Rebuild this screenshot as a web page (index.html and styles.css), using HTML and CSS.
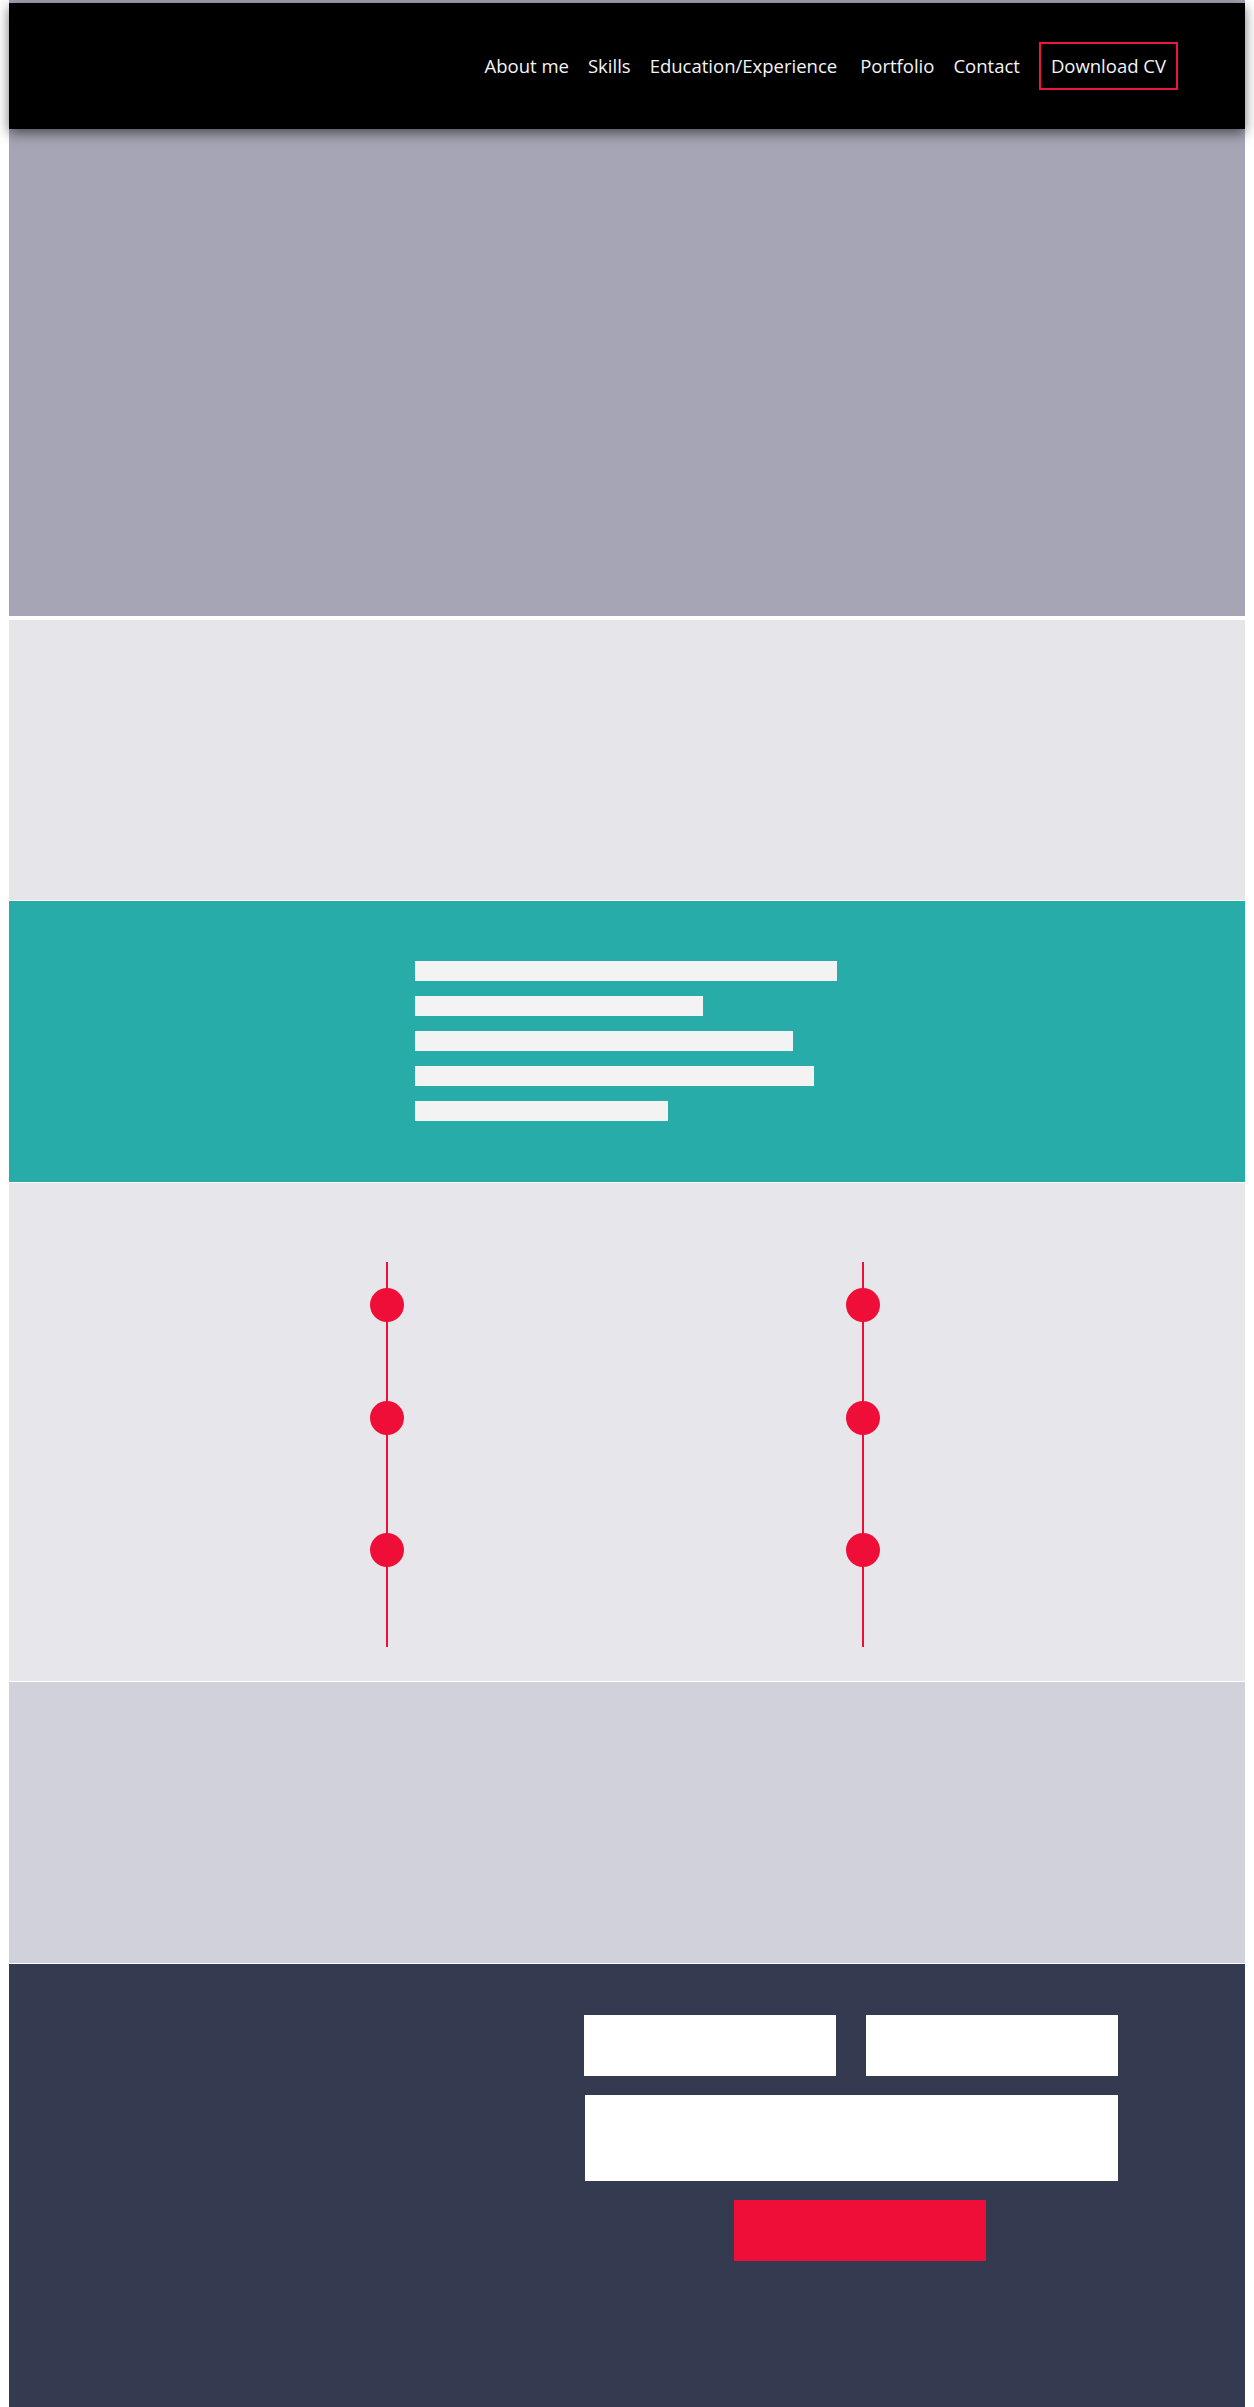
FILE: index.html
```html
<!DOCTYPE html>
<html lang="en">
<head>
    <meta charset="UTF-8">
    <meta name="viewport" content="width=device-width, initial-scale=1.0">
    <title>Portfolio</title>
    <link rel="stylesheet" href="styles.css">
</head>
<body>
    <div class="page">
        <header class="header">
            <nav class="nav">
                <a href="#about">About me</a>
                <a href="#skills">Skills</a>
                <a href="#education" class="wide">Education/Experience</a>
                <a href="#portfolio">Portfolio</a>
                <a href="#contact">Contact</a>
                <a href="#" class="cv-button">Download CV</a>
            </nav>
        </header>

        <section class="hero" id="home"></section>

        <section class="about" id="about"></section>

        <!-- skills placeholder lines -->
        <section class="skills" id="skills">
            <div class="bar-list">
                <div class="bar bar-1"></div>
                <div class="bar bar-2"></div>
                <div class="bar bar-3"></div>
                <div class="bar bar-4"></div>
                <div class="bar bar-5"></div>
            </div>
        </section>

        <section class="education" id="education">
            <div class="timeline">
                <span class="dot"></span>
                <span class="dot"></span>
                <span class="dot"></span>
            </div>
            <div class="timeline">
                <span class="dot"></span>
                <span class="dot"></span>
                <span class="dot"></span>
            </div>
        </section>

        <section class="portfolio" id="portfolio"></section>

        <section class="contact" id="contact">
            <div class="contact-info"></div>
            <form class="contact-form" onsubmit="return false;">
                <div class="form-row">
                    <input type="text" class="field" aria-label="Name">
                    <input type="email" class="field" aria-label="Email">
                </div>
                <textarea class="field message" aria-label="Message"></textarea>
                <button type="submit" class="send-button" aria-label="Send"></button>
            </form>
        </section>
    </div>
</body>
</html>
```

FILE: styles.css
```css
* {
    margin: 0;
    padding: 0;
    box-sizing: border-box;
}

body {
    background: #fff;
    padding: 0 9px;
    font-family: 'Open Sans', 'Liberation Sans', sans-serif;
}

.page {
    position: relative;
    display: flex;
    flex-direction: column;
    gap: 1px;
}

/* Navigation bar over the hero */
.header {
    position: absolute;
    top: 3px;
    left: 0;
    right: 0;
    height: 126px;
    background: #000;
    box-shadow: 0 4px 12px rgba(0, 0, 0, 0.55);
    display: flex;
    align-items: center;
    justify-content: flex-end;
    padding-right: 67px;
    z-index: 10;
}

.nav {
    display: flex;
    align-items: center;
    gap: 19px;
}

.nav a {
    color: #f4f4f4;
    text-decoration: none;
    font-size: 18.5px;
    line-height: 24px;
}

.nav a.wide {
    margin-right: 4px;
}

.nav .cv-button {
    height: 48px;
    padding: 0 10px;
    border: 2px solid #ea1640;
    display: flex;
    align-items: center;
}

.hero {
    height: 616px;
    background: #a5a5b5;
    margin-bottom: 3px;
}

.about {
    height: 280px;
    background: #e6e5ea;
}

.skills {
    height: 281px;
    background: #27aca9;
    padding: 60px 0 0 406px;
}

.bar-list {
    display: flex;
    flex-direction: column;
    gap: 15px;
}

.bar {
    height: 20px;
    background: #f3f3f3;
}

.bar-1 { width: 422px; }
.bar-2 { width: 288px; }
.bar-3 { width: 378px; }
.bar-4 { width: 399px; }
.bar-5 { width: 253px; }

.education {
    height: 498px;
    background: #e7e6eb;
    padding: 79px 0 34px 361px;
    display: flex;
    gap: 442px;
}

.timeline {
    width: 34px;
    height: 385px;
    background: linear-gradient(#ef0e37, #ef0e37) center / 2px 100% no-repeat;
    display: flex;
    flex-direction: column;
    padding-top: 26px;
}

.dot {
    width: 34px;
    height: 34px;
    border-radius: 50%;
    background: #ef0e37;
}

.dot + .dot {
    margin-top: 79px;
}

.dot:last-child {
    margin-top: 98px;
}

.portfolio {
    height: 281px;
    background: #d1d1db;
}

.contact {
    height: 443px;
    background: #343b50;
    padding-top: 51px;
    display: grid;
    grid-template-columns: 575px 534px;
    align-items: start;
}

.contact-form {
    display: flex;
    flex-direction: column;
    gap: 19px;
}

.form-row {
    display: flex;
    gap: 30px;
}

.field {
    display: block;
    border: none;
    background: #fff;
    width: 252px;
    height: 61px;
    outline: none;
    font-family: inherit;
}

.field.message {
    width: 533px;
    height: 86px;
    margin-left: 1px;
    resize: none;
}

.send-button {
    width: 252px;
    height: 61px;
    margin-left: 150px;
    border: none;
    background: #ef0e37;
    cursor: pointer;
}
```
